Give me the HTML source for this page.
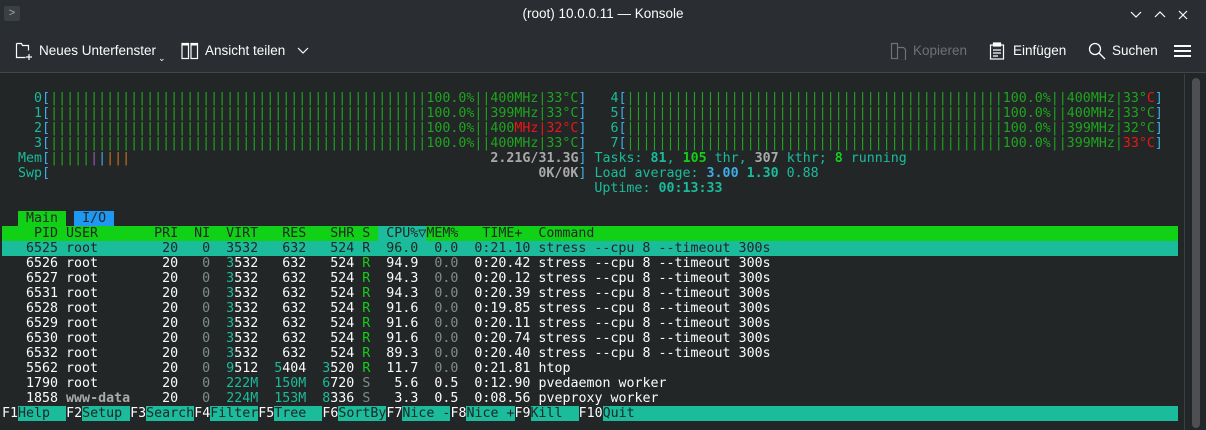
<!DOCTYPE html><html><head><meta charset="utf-8"><style>
*{margin:0;padding:0;box-sizing:border-box}
body{width:1206px;height:430px;background:#232627;overflow:hidden;position:relative;font-family:"Liberation Sans",sans-serif;color:#fcfcfc}
#top{position:absolute;left:0;top:0;width:1206px;height:73px;background:#2a2e32;border-bottom:1px solid #41464b}
.t{position:absolute;font-size:13.5px;color:#fcfcfc}
pre{position:absolute;left:2px;top:91px;width:1176px;overflow:hidden;font-family:"DejaVu Sans Mono","Liberation Mono",monospace;font-size:13.3px;line-height:15px;color:#fcfcfc;white-space:pre}
.g{color:#1ea51e}.c{color:#1abc9c}.b{color:#3daee9}.r{color:#ed1515}.gr{color:#7f8c8d}.bg{color:#11d116}
.o{color:#c8731b}.p{color:#9b59b6}.w{color:#aaaaaa;font-weight:bold}.bo{font-weight:bold}
.hd{background:#11d116;color:#232627}.sel{background:#1abc9c;color:#232627}
.fk{background:#1abc9c;color:#232627}
.blu{background:#1d99f3;color:#232627}
</style></head><body>
<div id="top">
<div style="position:absolute;left:4px;top:6px;width:16px;height:15px;background:#3b4045;border-radius:2px;color:#aaa;font-size:11px;line-height:14px;text-align:center">&gt;</div>
<div class="t" style="left:0;width:1206px;text-align:center;top:6px">(root) 10.0.0.11 — Konsole</div>
<svg style="position:absolute;left:1130px;top:8px" width="70" height="14" stroke="#fcfcfc" fill="none" stroke-width="1.2"><path d="M1 4l5 5 5-5"/><path d="M25 9l5-5 5 5"/><path d="M49 3l8 8M57 3l-8 8"/></svg>
<svg style="position:absolute;left:15px;top:42px" width="20" height="20" stroke="#fcfcfc" fill="none" stroke-width="1.2"><path d="M1.5 1.5h5l1 2h6v5M1.5 1.5v14h9"/><path d="M14 12v6M11 15h6"/></svg>
<div class="t" style="left:39px;top:43px">Neues Unterfenster</div>
<div class="t" style="left:158px;top:53px;font-size:9px">⌄</div>
<svg style="position:absolute;left:181px;top:42px" width="18" height="18" stroke="#fcfcfc" fill="none" stroke-width="1.2"><rect x="1" y="1.5" width="6.5" height="15"/><rect x="10" y="1.5" width="6.5" height="15"/><path d="M1 2.5h6.5M10 2.5h6.5" stroke-width="2"/></svg>
<div class="t" style="left:205px;top:43px">Ansicht teilen</div>
<svg style="position:absolute;left:297px;top:47px" width="12" height="8" stroke="#fcfcfc" fill="none" stroke-width="1.2"><path d="M1 1l5 5 5-5"/></svg>
<svg style="position:absolute;left:890px;top:42px" width="18" height="18" stroke="#6e7175" fill="none" stroke-width="1.2"><path d="M1.5 1.5h6v15h-6zM7.5 5.5h6l2 2v11h-8"/></svg>
<div class="t" style="left:913px;top:43px;color:#6e7175">Kopieren</div>
<svg style="position:absolute;left:989px;top:42px" width="18" height="18" stroke="#fcfcfc" fill="none" stroke-width="1.2"><rect x="1.5" y="3" width="13" height="14"/><rect x="4.5" y="1" width="7" height="3" fill="#fcfcfc"/><path d="M4 8h8M4 11h8M4 14h5"/></svg>
<div class="t" style="left:1013px;top:43px">Einfügen</div>
<svg style="position:absolute;left:1088px;top:42px" width="18" height="18" stroke="#fcfcfc" fill="none" stroke-width="1.3"><circle cx="7" cy="7" r="5.5"/><path d="M11 11l6 6"/></svg>
<div class="t" style="left:1112px;top:43px">Suchen</div>
<svg style="position:absolute;left:1174px;top:44px" width="18" height="14" stroke="#fcfcfc" stroke-width="2"><path d="M0 2h17M0 7h17M0 12h17"/></svg>
</div>
<div style="position:absolute;left:1184px;top:74px;width:1px;height:356px;background:#3a3f44"></div>
<div style="position:absolute;left:1192px;top:78px;width:8px;height:350px;background:#4d4f52;border-radius:4px"></div>
<pre>    <span class="c">0</span><span class="b">[</span><span class="g">|||||||||||||||||||||||||||||||||||||||||||||||100.0%||400MHz|33°C</span><span class="b">]</span>   <span class="c">4</span><span class="b">[</span><span class="g">|||||||||||||||||||||||||||||||||||||||||||||||100.0%||400MHz|33°</span><span class="r">C</span><span class="b">]</span>
    <span class="c">1</span><span class="b">[</span><span class="g">|||||||||||||||||||||||||||||||||||||||||||||||100.0%||399MHz|33°C</span><span class="b">]</span>   <span class="c">5</span><span class="b">[</span><span class="g">|||||||||||||||||||||||||||||||||||||||||||||||100.0%||400MHz|33°C</span><span class="b">]</span>
    <span class="c">2</span><span class="b">[</span><span class="g">|||||||||||||||||||||||||||||||||||||||||||||||100.0%||400</span><span class="r">MHz|32°C</span><span class="b">]</span>   <span class="c">6</span><span class="b">[</span><span class="g">|||||||||||||||||||||||||||||||||||||||||||||||100.0%||399MHz|32°C</span><span class="b">]</span>
    <span class="c">3</span><span class="b">[</span><span class="g">|||||||||||||||||||||||||||||||||||||||||||||||100.0%||400MHz|33°C</span><span class="b">]</span>   <span class="c">7</span><span class="b">[</span><span class="g">|||||||||||||||||||||||||||||||||||||||||||||||100.0%||399MHz|</span><span class="r">33°C</span><span class="b">]</span>
  <span class="c">Mem</span><span class="b">[</span><span class="g">|||||</span><span class="p">|</span><span class="b">|</span><span class="o">|||</span>                                             <span class="w">2.21G/31.3G</span><span class="b">]</span> <span class="c">Tasks: <span class="bo">81</span>, <span class="bo bg">105</span> thr, <span class="w">307</span> kthr; <span class="bo bg">8</span> running</span>
  <span class="c">Swp</span><span class="b">[</span>                                                             <span class="w">0K/0K</span><span class="b">]</span> <span class="c">Load average: <span class="bo b">3.00</span> <span class="bo">1.30</span> 0.88</span>
                                                                          <span class="c">Uptime: <span class="bo">00:13:33</span></span>

  <span class="hd"> Main </span> <span class="blu"> I/O </span>
<span class="hd">    PID USER       PRI  NI  VIRT   RES   SHR S </span><span class="sel"> CPU%▽</span><span class="hd">MEM%   TIME+  Command                                                                                </span>
<span class="sel">   6525 root        20   0  3532   632   524 R  96.0  0.0  0:21.10 stress --cpu 8 --timeout 300s                                                                                </span>
   6526 root        20   <span class="gr">0</span>  <span class="c">3</span>532   632   524 <span class="bg">R</span>  94.9  <span class="gr">0.0</span>  0:20.42 stress --cpu 8 --timeout 300s
   6527 root        20   <span class="gr">0</span>  <span class="c">3</span>532   632   524 <span class="bg">R</span>  94.3  <span class="gr">0.0</span>  0:20.12 stress --cpu 8 --timeout 300s
   6531 root        20   <span class="gr">0</span>  <span class="c">3</span>532   632   524 <span class="bg">R</span>  94.3  <span class="gr">0.0</span>  0:20.39 stress --cpu 8 --timeout 300s
   6528 root        20   <span class="gr">0</span>  <span class="c">3</span>532   632   524 <span class="bg">R</span>  91.6  <span class="gr">0.0</span>  0:19.85 stress --cpu 8 --timeout 300s
   6529 root        20   <span class="gr">0</span>  <span class="c">3</span>532   632   524 <span class="bg">R</span>  91.6  <span class="gr">0.0</span>  0:20.11 stress --cpu 8 --timeout 300s
   6530 root        20   <span class="gr">0</span>  <span class="c">3</span>532   632   524 <span class="bg">R</span>  91.6  <span class="gr">0.0</span>  0:20.74 stress --cpu 8 --timeout 300s
   6532 root        20   <span class="gr">0</span>  <span class="c">3</span>532   632   524 <span class="bg">R</span>  89.3  <span class="gr">0.0</span>  0:20.40 stress --cpu 8 --timeout 300s
   5562 root        20   <span class="gr">0</span>  <span class="c">9</span>512  <span class="c">5</span>404  <span class="c">3</span>520 <span class="bg">R</span>  11.7  <span class="gr">0.0</span>  0:21.81 htop
   1790 root        20   <span class="gr">0</span>  <span class="c">222M</span>  <span class="c">150M</span>  <span class="c">6</span>720 <span class="gr">S</span>   5.6  0.5  0:12.90 pvedaemon worker
   1858 <span class="w">www-data</span>    20   <span class="gr">0</span>  <span class="c">224M</span>  <span class="c">153M</span>  <span class="c">8</span>336 <span class="gr">S</span>   3.3  0.5  0:08.56 pveproxy worker
F1<span class="fk">Help  </span>F2<span class="fk">Setup </span>F3<span class="fk">Search</span>F4<span class="fk">Filter</span>F5<span class="fk">Tree  </span>F6<span class="fk">SortBy</span>F7<span class="fk">Nice -</span>F8<span class="fk">Nice +</span>F9<span class="fk">Kill  </span>F10<span class="fk">Quit                                                                        </span></pre>
</body></html>
